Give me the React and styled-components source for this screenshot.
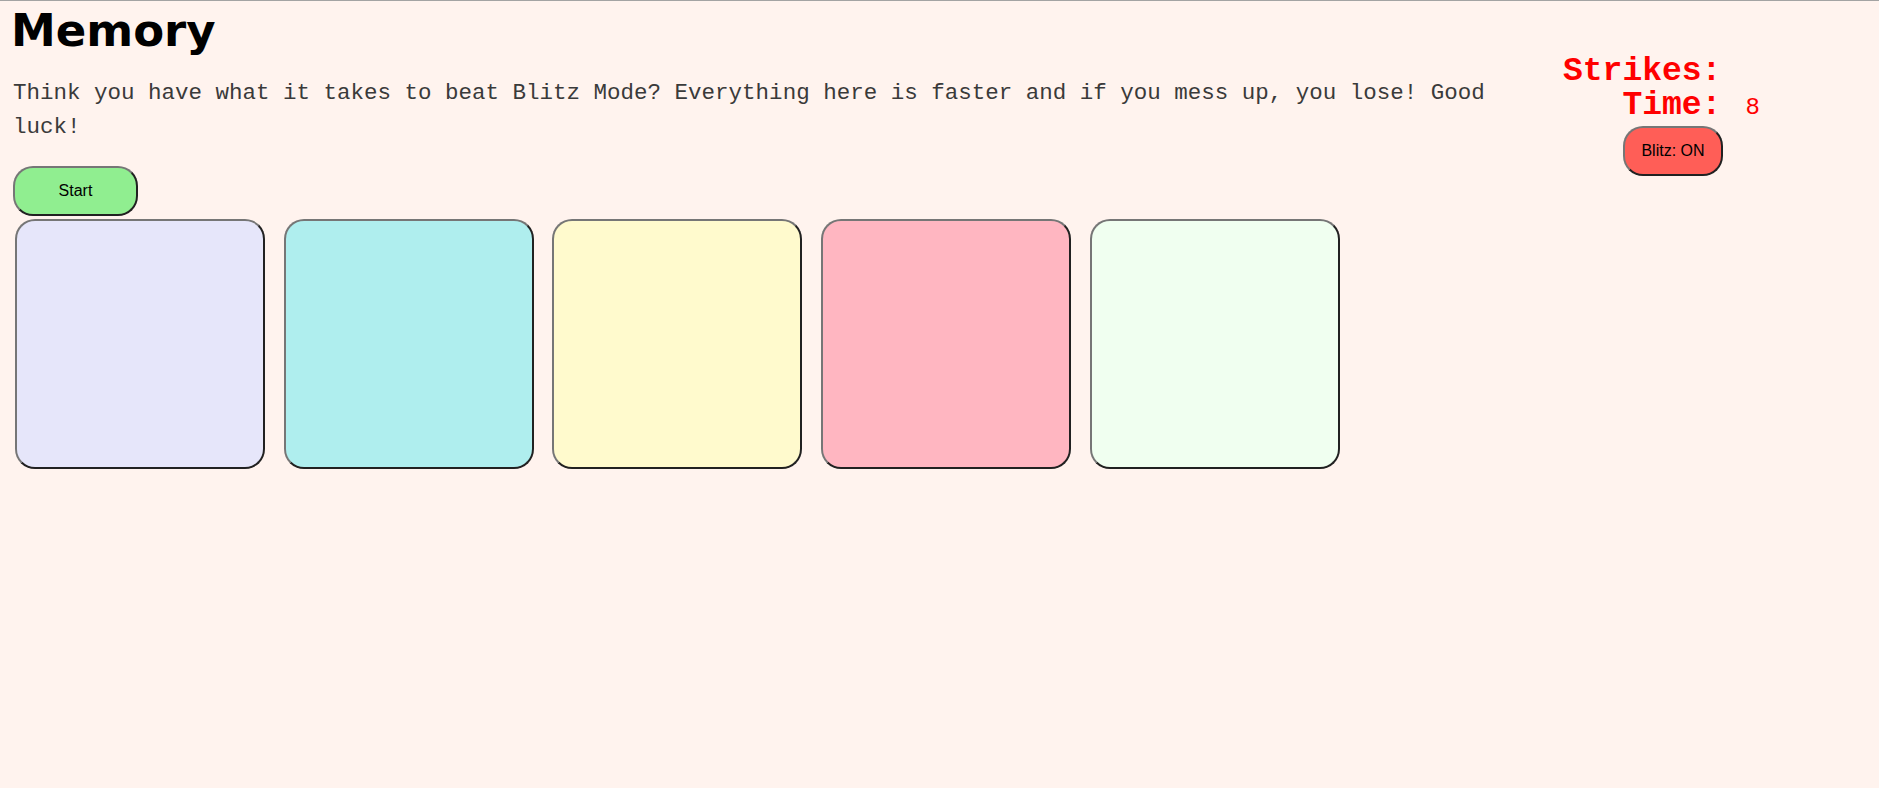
import React, { useState } from 'react';
import styled, { createGlobalStyle } from 'styled-components';

const GlobalStyle = createGlobalStyle`
  html, body {
    margin: 0;
    background-color: #fff3ee;
  }
  body {
    border-top: 1px solid #a3a3a3;
    min-height: 787px;
  }
`;

// page wrapper
const Page = styled.div`
  padding: 7px 0 0 13px;
`;

// heading + stats on one row
const TopRow = styled.div`
  display: flex;
  align-items: flex-start;
`;

const Intro = styled.div`
  flex: 1;
  margin-right: 40px;
`;

const Title = styled.h1`
  margin: 0 0 0 -2px;
  font-family: 'DejaVu Sans', Verdana, sans-serif;
  font-weight: bold;
  font-size: 45px;
  line-height: 45px;
  color: #000;
`;

const Description = styled.p`
  margin: 24px 0 22px 0;
  font-family: 'Liberation Mono', 'Courier New', monospace;
  font-size: 22.5px;
  line-height: 33.6px;
  color: #3a3a3a;
`;

const PillButton = styled.button`
  box-sizing: border-box;
  width: ${(p) => p.$width}px;
  height: 50px;
  border: 2px outset #767676;
  border-radius: 20px;
  background-color: ${(p) => p.$bg};
  font-family: 'Liberation Sans', Arial, sans-serif;
  font-size: 16px;
  color: #000;
  cursor: pointer;
`;

// strikes / time panel
const Panel = styled.div`
  flex: 0 0 220px;
  margin: 47px 96px 0 0;
  display: flex;
  flex-direction: column;
  align-items: flex-start;
`;

const Stats = styled.div`
  display: grid;
  grid-template-columns: auto auto;
  column-gap: 24px;
  align-items: baseline;
  color: red;
`;

const Label = styled.span`
  font-family: 'Liberation Mono', 'Courier New', monospace;
  font-weight: bold;
  font-size: 33px;
  line-height: 34px;
  text-align: right;
`;

const Value = styled.span`
  font-family: 'Liberation Mono', 'Courier New', monospace;
  font-size: 24px;
  line-height: 34px;
`;

const BlitzWrap = styled.div`
  align-self: stretch;
  display: flex;
  justify-content: center;
  margin-top: 1px;
`;

const Board = styled.div`
  display: flex;
  gap: 18.7px;
  margin: 3px 0 0 2px;
`;

const Card = styled.button`
  box-sizing: border-box;
  width: 250px;
  height: 250px;
  border: 2px outset #767676;
  border-radius: 20px;
  background-color: ${(p) => p.$color};
  cursor: pointer;
`;

const cardColors = ['#e6e6fa', '#afeeee', '#fffacd', '#ffb6c1', '#f0fff0'];

function App() {
  const [blitz, setBlitz] = useState(true);

  return (
    <Page>
      <GlobalStyle />
      <TopRow>
        <Intro>
          <Title>Memory</Title>
          <Description>
            Think you have what it takes to beat Blitz Mode? Everything here is faster and if
            you mess up, you lose! Good luck!
          </Description>
          <PillButton $width={125} $bg="#90ee90">
            Start
          </PillButton>
        </Intro>
        <Panel>
          <Stats>
            <Label>Strikes:</Label>
            <Value></Value>
            <Label>Time:</Label>
            <Value>8</Value>
          </Stats>
          <BlitzWrap>
            <PillButton $width={100} $bg="#ff5e57" onClick={() => setBlitz(!blitz)}>
              Blitz: {blitz ? 'ON' : 'OFF'}
            </PillButton>
          </BlitzWrap>
        </Panel>
      </TopRow>
      <Board>
        {cardColors.map((c) => (
          <Card key={c} $color={c} />
        ))}
      </Board>
    </Page>
  );
}

export default App;
